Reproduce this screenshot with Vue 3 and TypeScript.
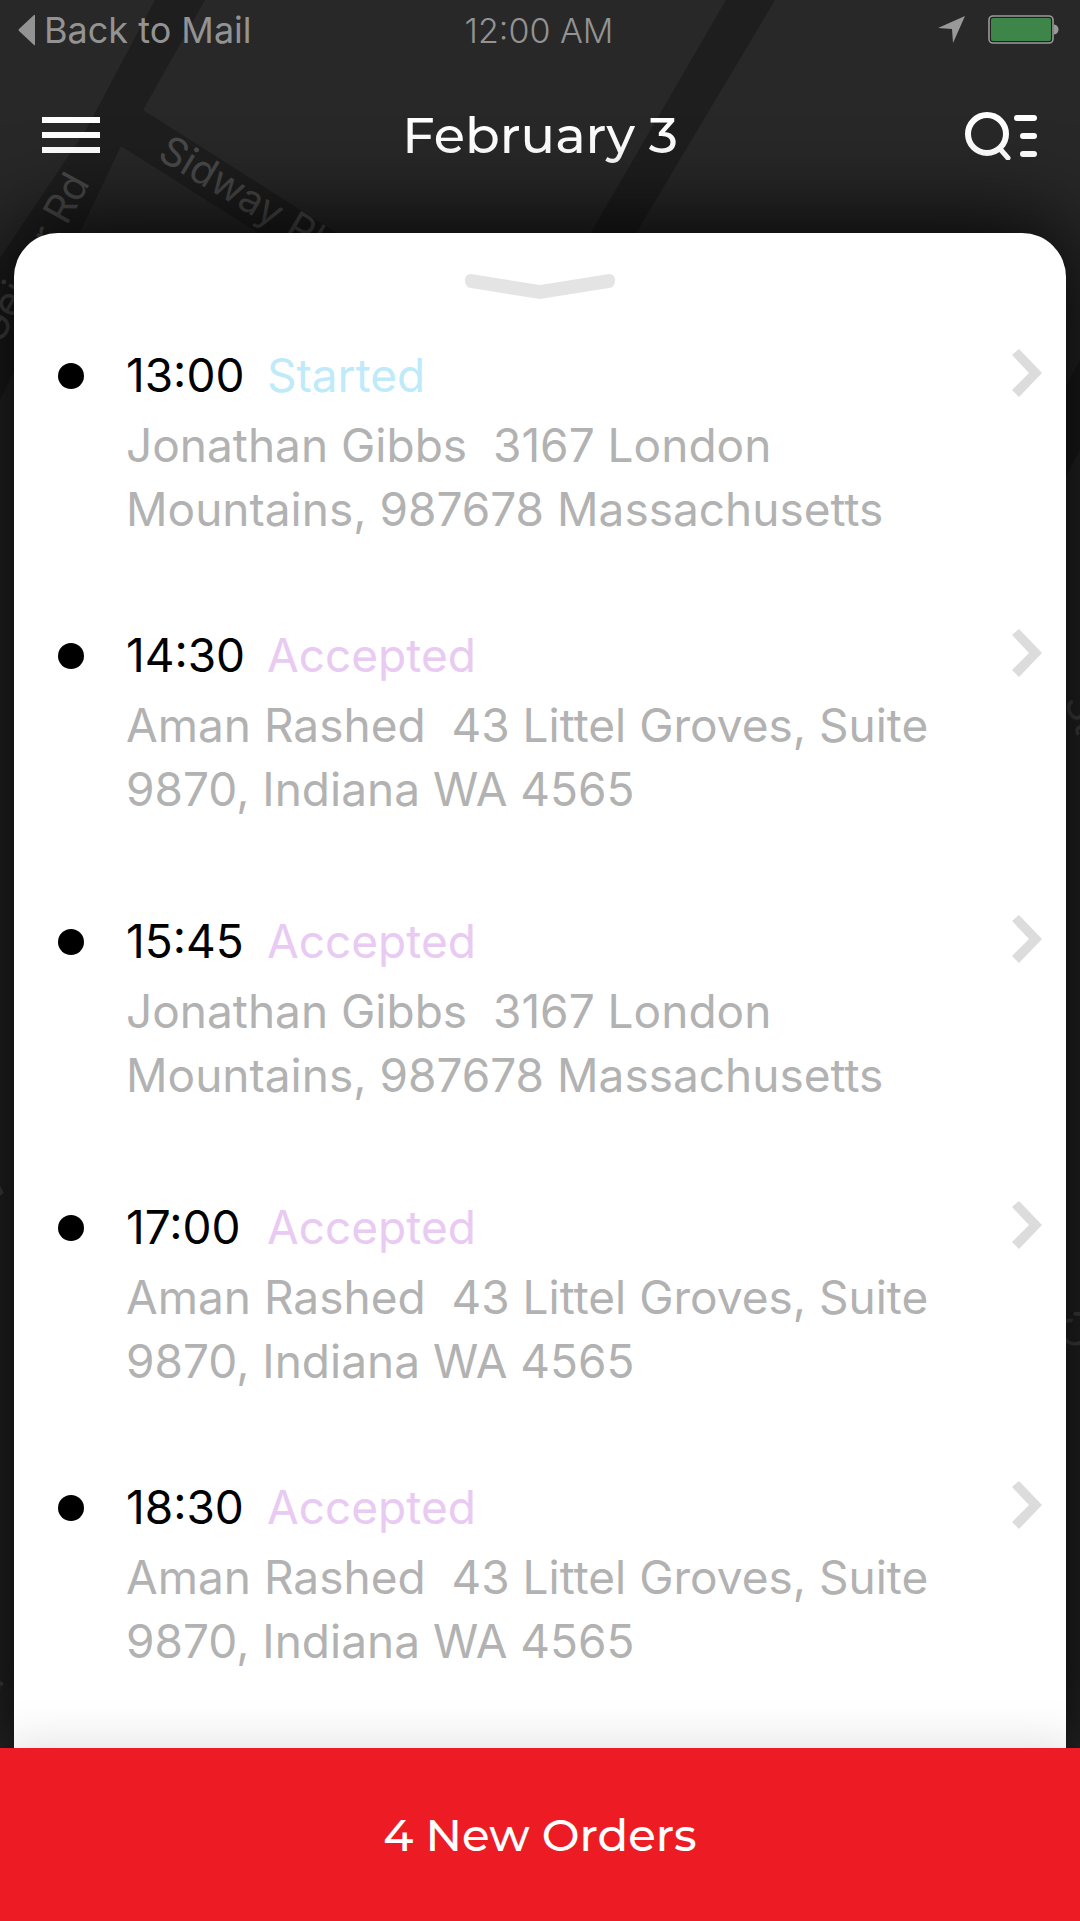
<script setup lang="ts">
interface Order {
  time: string
  status: 'Started' | 'Accepted'
  details: string
}

const gibbs = 'Jonathan Gibbs  3167 London Mountains, 987678 Massachusetts'
const rashed = 'Aman Rashed  43 Littel Groves, Suite 9870, Indiana WA 4565'

const orders: Order[] = [
  { time: '13:00', status: 'Started', details: gibbs },
  { time: '14:30', status: 'Accepted', details: rashed },
  { time: '15:45', status: 'Accepted', details: gibbs },
  { time: '17:00', status: 'Accepted', details: rashed },
  { time: '18:30', status: 'Accepted', details: rashed },
]
</script>

<template>
  <div class="screen">
    <svg class="map" viewBox="0 0 1080 1921" preserveAspectRatio="xMidYMin slice" aria-hidden="true">
      <path class="road" d="M155 0H205L143 110L420 286L380 310L121 146L0 400V258L86 130Z" />
      <path class="road" d="M726 0H775L620 260H575Z" />
      <path class="road" d="M1080 360L1064 390V480L1080 450Z" />
      <text transform="translate(156 158) rotate(31)">Sidway Pl</text>
      <text transform="translate(0 346) rotate(-61)">Geiger Rd</text>
      <text transform="translate(-18 1214) rotate(-45)">W</text>
      <text transform="translate(-6 1700) rotate(-60)">a</text>
      <text transform="translate(1064 700) rotate(70)">St</text>
      <text transform="translate(1080 1352) rotate(-65)">Cyp</text>
    </svg>

    <header>
      <div class="status-bar">
        <a class="back" href="#">
          <svg width="18" height="32" viewBox="0 0 18 32" aria-hidden="true">
            <path d="M16 1Q17 0 17 2V30Q17 32 16 31L1 17Q0 16 1 15Z" fill="currentColor" />
          </svg>
          <span>Back to Mail</span>
        </a>
        <span class="clock">12:00 AM</span>
        <div class="indicators">
          <svg width="28" height="28" viewBox="0 0 28 28" aria-hidden="true">
            <path d="M27 0L15 27L14 13L0 12Z" fill="#999" />
          </svg>
          <svg width="72" height="30" viewBox="0 0 72 30" aria-hidden="true">
            <rect x="1" y="1" width="64" height="27" rx="4" fill="#222" stroke="#9a9a9a" stroke-width="1.6" />
            <rect x="3" y="3" width="60" height="23" rx="2" fill="#3d8549" />
            <path d="M66 9.500C72 10 72 19 66 19.500Z" fill="#999" />
          </svg>
        </div>
      </div>
      <div class="title-bar">
        <button type="button" aria-label="Menu">
          <svg width="58" height="38" viewBox="0 0 58 38" fill="#fff" aria-hidden="true">
            <path d="M0 1H58V7H0ZM0 16H58V22H0ZM0 31H58V37H0Z" />
          </svg>
        </button>
        <h1>February 3</h1>
        <button type="button" aria-label="Search and filter">
          <svg width="74" height="50" viewBox="0 0 74 50" fill="none" stroke="#fff" stroke-linecap="round" aria-hidden="true">
            <circle cx="23" cy="24" r="19" stroke-width="6" />
            <path d="M37 40L44 48" stroke-width="5" />
            <path d="M53 8H70M59 26H70M59 44H70" stroke-width="6" />
          </svg>
        </button>
      </div>
    </header>

    <main class="sheet">
      <button class="grabber" type="button" aria-label="Collapse list">
        <svg width="150" height="26" viewBox="0 0 150 26" aria-hidden="true">
          <path d="M6 0L75 11L144 0Q150 0 150 6Q150 13 144 14L75 25L6 14Q0 13 0 6Q0 0 6 0Z" fill="#e4e4e4" />
        </svg>
      </button>
      <ul>
        <li v-for="order in orders" :key="order.time">
          <a class="order" href="#">
            <span class="dot"></span>
            <span class="body">
              <span class="heading">
                <time>{{ order.time }}</time>
                <span :class="order.status.toLowerCase()">{{ order.status }}</span>
              </span>
              <span class="details">{{ order.details }}</span>
            </span>
            <svg class="chevron" width="32" height="48" viewBox="0 0 32 48" aria-hidden="true">
              <path d="M0 6L7 0L30 24L7 48L0 41L17 24Z" fill="#dcdcdc" />
            </svg>
          </a>
        </li>
      </ul>
    </main>

    <button class="new-orders" type="button">4 New Orders</button>
  </div>
</template>

<style>
body {
  margin: 0;
  background: #282828;
}
</style>

<style scoped>
.screen {
  position: relative;
  display: flex;
  flex-direction: column;
  min-height: 100vh;
  overflow: hidden;
  background: #282828;
  font-family: Inter, 'Liberation Sans', sans-serif;
}

.map {
  position: absolute;
  inset: 0;
  width: 100%;
  height: 100%;
  fill: #4a4a4a;
  font-size: 40px;
}

.road {
  fill: #1e1e1e;
}

header {
  position: relative;
}

button {
  padding: 0;
  border: 0;
  background: none;
  font: inherit;
}

button svg {
  display: block;
}

a {
  color: inherit;
  text-decoration: none;
}

.status-bar {
  display: grid;
  grid-template-columns: 1fr auto 1fr;
  align-items: center;
  height: 60px;
  padding: 0 20px 0 18px;
  color: #939393;
  font-size: 34px;
}

.back {
  display: flex;
  align-items: center;
  gap: 8px;
  font-size: 36px;
}

.clock {
  font-weight: 300;
}

.indicators {
  display: flex;
  justify-content: flex-end;
  align-items: center;
  gap: 22px;
}

.title-bar {
  display: grid;
  grid-template-columns: 1fr auto 1fr;
  align-items: center;
  height: 150px;
  padding: 0 42px;
  margin-bottom: 23px;
}

.title-bar button:first-child {
  justify-self: start;
}

.title-bar button:last-child {
  justify-self: end;
}

h1 {
  margin: 0;
  color: #fff;
  font-family: Montserrat, Inter, sans-serif;
  font-size: 51px;
  font-weight: 500;
}

.sheet {
  position: relative;
  flex: 1;
  margin: 0 14px;
  border-radius: 44px 44px 0 0;
  background: #fff;
  box-shadow: 0 0 90px 10px rgba(0, 0, 0, 0.9);
}

.grabber {
  display: block;
  margin: 0 auto;
  padding: 41px 0 43px;
}

ul {
  margin: 0;
  padding: 0 0 32px;
  list-style: none;
}

li {
  padding-bottom: 82px;
}

li:nth-child(2),
li:nth-child(3) {
  padding-bottom: 88px;
}

li:last-child {
  padding-bottom: 0;
}

.order {
  display: flex;
  align-items: flex-start;
  padding: 0 22px 0 44px;
}

.dot {
  flex: none;
  width: 26px;
  height: 26px;
  margin: 20px 42px 0 0;
  border-radius: 50%;
  background: #000;
}

.body {
  flex: 1;
  font-size: 46px;
  line-height: 64px;
}

.heading {
  display: flex;
  margin-bottom: 6px;
}

.heading time {
  flex: none;
  width: 141px;
}

.started {
  color: #bfeafa;
}

.accepted {
  color: #e8caf2;
}

.details {
  display: block;
  max-width: 820px;
  color: #b2b2b2;
  white-space: pre-wrap;
}

.chevron {
  flex: none;
  margin-top: 6px;
}

.new-orders {
  position: relative;
  height: 173px;
  background: #ed1c24;
  box-shadow: 0 0 50px rgba(0, 0, 0, 0.14);
  color: #fff;
  font-family: Montserrat, Inter, sans-serif;
  font-size: 45px;
  font-weight: 500;
}
</style>
